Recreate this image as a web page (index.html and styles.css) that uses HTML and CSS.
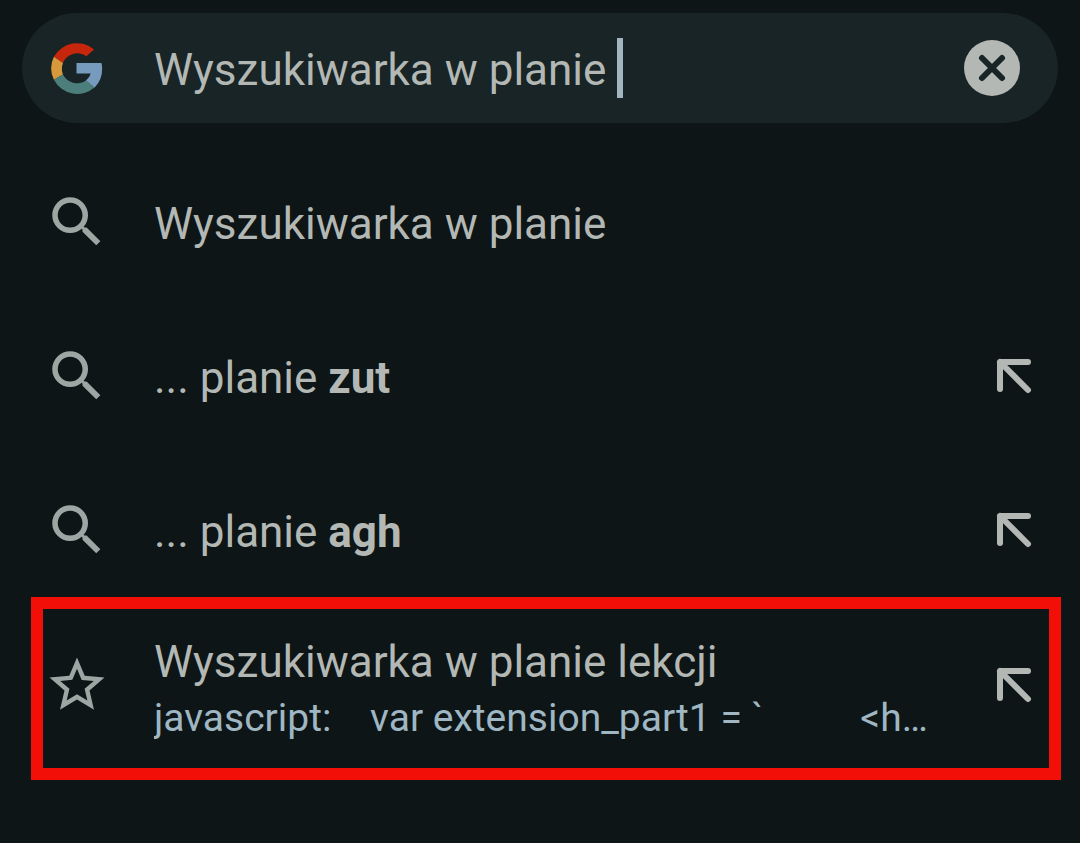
FILE: index.html
```html
<!DOCTYPE html>
<html lang="pl">
<head>
<meta charset="utf-8">
<meta name="viewport" content="width=device-width, initial-scale=1">
<title>Wyszukiwarka w planie</title>
<link rel="stylesheet" href="styles.css">
</head>
<body>
<svg class="symbols" aria-hidden="true">
  <symbol id="search" viewBox="0 0 24 24"><path d="M15.5 14h-.79l-.28-.27A6.47 6.47 0 0 0 16 9.500 6.500 6.500 0 1 0 9.500 16c1.610 0 3.090-.590 4.230-1.570l.27.280v.790l5 4.990L20.490 19l-4.990-5zm-6 0C7.010 14 5 11.990 5 9.500S7.010 5 9.500 5 14 7.010 14 9.500 11.990 14 9.500 14z"/></symbol>
  <symbol id="arrow" viewBox="0 0 36 36"><path d="M32 4H4V31M4 4L32 32" fill="none" stroke="currentColor" stroke-width="6" stroke-linecap="round" stroke-linejoin="round"/></symbol>
</svg>
<form class="omnibox" role="search">
  <svg class="logo" viewBox="152 126 156 157" role="img" aria-label="Google">
    <path class="logo-red" d="M282 148A78 78 0 0 0 163 170L190 188A46 46 0 0 1 259 168Z"/>
    <path class="logo-yellow" d="M163 170A78 78 0 0 0 163 238L190 222A46 46 0 0 1 190 188Z"/>
    <path class="logo-green" d="M163 238A78 78 0 0 0 284 260L258 240A46 46 0 0 1 190 222Z"/>
    <path class="logo-blue" d="M230 188H304Q306 196 306 204A76 78 0 0 1 284 261L258 240Q269 231 272 219H230Z"/>
  </svg>
  <div class="field">
    <input class="query" type="text" aria-label="Szukaj" value="Wyszukiwarka w planie " size="22">
    <span class="caret"></span>
  </div>
  <button class="clear" type="button" aria-label="Wyczyść">
    <svg viewBox="0 0 56 56"><circle cx="28" cy="28" r="28" fill="currentColor"/><path class="cross" d="M18 18L38 38M38 18L18 38"/></svg>
  </button>
</form>
<ul class="results">
  <li class="result">
    <a class="suggestion" href="#"><svg class="icon"><use href="#search"/></svg><span class="text"><span class="title">Wyszukiwarka w planie</span></span></a>
  </li>
  <li class="result">
    <a class="suggestion" href="#"><svg class="icon"><use href="#search"/></svg><span class="text"><span class="title">... planie <b>zut</b></span></span></a>
    <button class="fill" type="button" aria-label="Uzupełnij: planie zut"><svg><use href="#arrow"/></svg></button>
  </li>
  <li class="result">
    <a class="suggestion" href="#"><svg class="icon"><use href="#search"/></svg><span class="text"><span class="title">... planie <b>agh</b></span></span></a>
    <button class="fill" type="button" aria-label="Uzupełnij: planie agh"><svg><use href="#arrow"/></svg></button>
  </li>
  <li class="result highlighted">
    <a class="suggestion" href="#">
      <svg class="icon" viewBox="0 0 24 24"><path d="M22 9.240l-7.190-.620L12 2 9.190 8.630 2 9.240l5.460 4.730L5.820 21 12 17.270 18.180 21l-1.630-7.030L22 9.240zM12 15.400l-3.760 2.270 1-4.280-3.320-2.880 4.380-.380L12 6.100l1.710 4.040 4.380.380-3.320 2.880 1 4.280L12 15.400z"/></svg>
      <span class="text"><span class="title">Wyszukiwarka w planie lekcji</span><span class="address">javascript:    var extension_part1 = `          &lt;h…</span></span>
    </a>
    <button class="fill" type="button" aria-label="Uzupełnij: Wyszukiwarka w planie lekcji"><svg><use href="#arrow"/></svg></button>
  </li>
</ul>
</body>
</html>
```
FILE: styles.css
```css
* { box-sizing: border-box; }

body {
  min-height: 100vh;
  margin: 0;
  padding: 13px 22px;
  background: #0d1516;
  color: #b3b8b4;
  font-family: Roboto, "Noto Sans", sans-serif;
  font-size: 44px;
  line-height: 56px;
}

button {
  flex: none;
  padding: 0;
  border: 0;
  background: none;
  color: inherit;
}

svg { display: block; }

.symbols { display: none; }

.omnibox {
  display: flex;
  align-items: center;
  height: 110px;
  padding: 0 38px 0 28px;
  border-radius: 55px;
  background: #182425;
}

.logo {
  flex: none;
  width: 53px;
  height: 53px;
  margin-right: 51px;
}

.logo-red { fill: #c5260c; }
.logo-yellow { fill: #d69a3c; }
.logo-green { fill: #4c7f7b; }
.logo-blue { fill: #769bbd; }

.field {
  display: flex;
  flex: 1;
  align-items: center;
  min-width: 0;
}

.query {
  field-sizing: content;
  min-width: 0;
  padding: 4px 0 0;
  border: 0;
  outline: 0;
  background: none;
  color: inherit;
  font: inherit;
}

.caret {
  width: 6px;
  height: 60px;
  background: #a3b6c0;
}

.clear svg {
  width: 56px;
  height: 56px;
}

.cross {
  fill: none;
  stroke: #182425;
  stroke-width: 6;
  stroke-linecap: round;
}

.results {
  margin: 22px 0 0;
  padding: 0;
  list-style: none;
}

.result {
  position: relative;
  display: flex;
  align-items: center;
  height: 154px;
  padding: 0 26px 0 22px;
}

.suggestion {
  display: flex;
  flex: 1;
  align-items: center;
  gap: 44px;
  min-width: 0;
  color: inherit;
  text-decoration: none;
}

.icon {
  flex: none;
  width: 66px;
  height: 66px;
  fill: #9ea6a4;
}

.text {
  display: flex;
  flex-direction: column;
  min-width: 0;
  padding-top: 4px;
}

.title,
.address {
  overflow: hidden;
  white-space: pre;
}

.address {
  color: #9fb6c3;
  font-size: 39px;
}

.fill svg {
  width: 36px;
  height: 36px;
}

.highlighted { height: 156px; }

.highlighted .text { padding-top: 9px; }

.highlighted::after {
  content: "";
  position: absolute;
  inset: -10px -3px -17px 9px;
  border: 12px solid #f20f08;
  pointer-events: none;
}
```
